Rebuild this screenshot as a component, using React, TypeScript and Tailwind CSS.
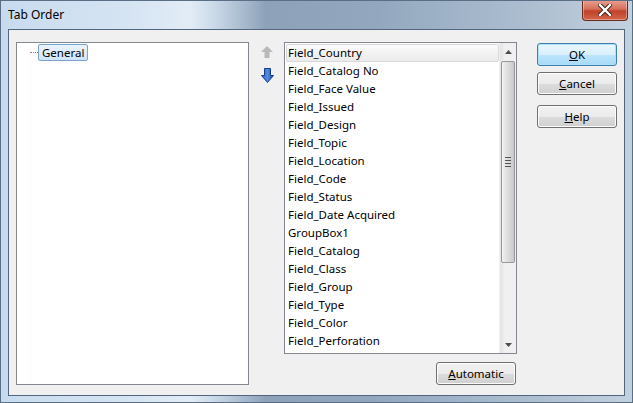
import React from 'react';

const fields = [
  'Field_Country',
  'Field_Catalog No',
  'Field_Face Value',
  'Field_Issued',
  'Field_Design',
  'Field_Topic',
  'Field_Location',
  'Field_Code',
  'Field_Status',
  'Field_Date Acquired',
  'GroupBox1',
  'Field_Catalog',
  'Field_Class',
  'Field_Group',
  'Field_Type',
  'Field_Color',
  'Field_Perforation',
];

const WinButton: React.FC<{ label: string; accel: string; primary?: boolean; className?: string }> = ({
  label,
  accel,
  primary,
  className = '',
}) => {
  const i = label.indexOf(accel);
  return (
    <button
      className={`w-[80px] h-[23px] rounded-[3px] border text-[11.5px] text-black flex items-center justify-center ${
        primary
          ? 'border-[#3c7fb1] bg-[linear-gradient(#eaf6fd_0%,#d9f0fc_50%,#bee6fd_50%,#a7d9f5_100%)] shadow-[inset_0_0_0_1px_#b0e0f8]'
          : 'border-[#707070] bg-[linear-gradient(#f2f2f2_0%,#ebebeb_50%,#dddddd_50%,#cfcfcf_100%)] shadow-[inset_0_0_0_1px_#fcfcfc]'
      } ${className}`}
    >
      <span>
        {label.slice(0, i)}
        <span className="underline underline-offset-1">{accel}</span>
        {label.slice(i + 1)}
      </span>
    </button>
  );
};

const ScrollArrow: React.FC<{ down?: boolean }> = ({ down }) => (
  <svg width="7" height="4" viewBox="0 0 7 4">
    <polygon points={down ? '0,0 7,0 3.5,4' : '3.5,0 7,4 0,4'} fill="#4d4d4d" />
  </svg>
);

export default function App() {
  return (
    <div
      className="w-[633px] h-[403px] flex flex-col bg-[linear-gradient(90deg,#c8dbee_0%,#d5e4f3_20%,#e2ecf6_30%,#c9d8e8_34%,#8da2b9_42%,#93a8bf_60%,#aebfd1_85%,#c3d1df_100%)] px-[7px] pb-[6px] overflow-hidden border border-[#5a6f86]"
      style={{ fontFamily: '"Noto Sans", "Open Sans", sans-serif' }}
    >
      {/* title bar */}
      <div className="h-[28px] flex items-start relative shrink-0">
        <span className="mt-[5px] text-[12px] text-black">Tab Order</span>
        <div className="absolute right-[-3px] top-[-1px] w-[46px] h-[21px] rounded-b-[4px] border border-t-0 border-[#6b2a1e] bg-[linear-gradient(#e8a192_0%,#d6705c_45%,#c0422a_55%,#d1654b_100%)] flex items-center justify-center shadow-[inset_0_0_0_1px_rgba(255,255,255,0.35)]">
          <svg width="14" height="12" viewBox="0 0 14 12">
            <path d="M2 1 L12 11 M12 1 L2 11" stroke="#3a1a14" strokeWidth="4.2" strokeLinecap="square" />
            <path d="M2 1 L12 11 M12 1 L2 11" stroke="#ffffff" strokeWidth="2.4" strokeLinecap="square" />
          </svg>
        </div>
      </div>

      {/* client area */}
      <div className="flex-1 border border-[#52677f] bg-[#f0f0f0] flex pl-[7px] pt-[12px]">
        {/* tree */}
        <div className="w-[233px] h-[343px] border border-[#828790] bg-white shrink-0">
          <div className="flex items-center pt-[1px] pl-[13px]">
            <div className="w-[8px] border-t border-dotted border-[#808080]" />
            <div className="h-[17px] px-[3px] flex items-center rounded-[2px] border border-[#7da2ce] bg-[linear-gradient(#ebf4fd,#cfe4fa)] text-[11.5px] text-black">
              General
            </div>
          </div>
        </div>

        {/* move arrows */}
        <div className="w-[35px] shrink-0 flex flex-col items-center pt-[4px] pl-[1px]">
          <svg width="12" height="12" viewBox="0 0 12 12">
            <polygon points="6,0 12,6 8.5,6 8.5,12 3.5,12 3.5,6 0,6" fill="#b9b9b9" />
          </svg>
          <svg width="13" height="15" viewBox="0 0 13 15" className="mt-[10px]">
            <defs>
              <linearGradient id="dn" x1="0" x2="1" y1="0" y2="0">
                <stop offset="0" stopColor="#2a64c4" />
                <stop offset="0.5" stopColor="#4f8be0" />
                <stop offset="1" stopColor="#1a4ea6" />
              </linearGradient>
            </defs>
            <polygon points="3.5,0.5 9.5,0.5 9.5,7.5 12.5,7.5 6.5,14.5 0.5,7.5 3.5,7.5" fill="url(#dn)" stroke="#173e8a" strokeWidth="1" />
          </svg>
        </div>

        {/* field list */}
        <div className="w-[233px] shrink-0 flex flex-col">
          <div className="h-[312px] border border-[#828790] bg-white flex">
            <div className="flex-1 pt-[1px] pl-[1px]">
              {fields.map((f, i) => (
                <div
                  key={f}
                  className={`h-[18px] flex items-center text-[11.5px] text-black ${
                    i === 0
                      ? 'rounded-[2px] border border-[#d9d9d9] bg-[linear-gradient(#fafafa,#ebebeb)] pl-[1px]'
                      : 'pl-[2px]'
                  }`}
                >
                  {f}
                </div>
              ))}
            </div>
            {/* scrollbar */}
            <div className="w-[17px] shrink-0 bg-[linear-gradient(90deg,#e3e3e3,#f0f0f0_30%,#f0f0f0)] flex flex-col border-l border-[#f0f0f0]">
              <div className="h-[17px] flex items-center justify-center">
                <ScrollArrow />
              </div>
              <div className="h-[202px] mx-[1px] mt-[1px] rounded-[2px] border border-[#979797] bg-[linear-gradient(90deg,#f2f2f2,#dcdcdc_50%,#c9c9c9)] flex items-center justify-center">
                <div className="flex flex-col gap-[2px]">
                  <div className="w-[6px] h-[1px] bg-[#555]" />
                  <div className="w-[6px] h-[1px] bg-[#555]" />
                  <div className="w-[6px] h-[1px] bg-[#555]" />
                  <div className="w-[6px] h-[1px] bg-[#555]" />
                </div>
              </div>
              <div className="flex-1" />
              <div className="h-[17px] flex items-center justify-center">
                <ScrollArrow down />
              </div>
            </div>
          </div>
          <div className="flex justify-end mt-[8px] pr-[1px]">
            <WinButton label="Automatic" accel="A" />
          </div>
        </div>

        {/* buttons */}
        <div className="ml-[20px] flex flex-col pt-[1px]">
          <WinButton label="OK" accel="O" primary />
          <WinButton label="Cancel" accel="C" className="mt-[6px]" />
          <WinButton label="Help" accel="H" className="mt-[10px]" />
        </div>
      </div>
    </div>
  );
}
